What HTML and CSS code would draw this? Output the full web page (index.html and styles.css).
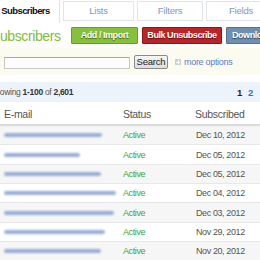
FILE: index.html
```html
<!DOCTYPE html>
<html>
<head>
<meta charset="utf-8">
<link rel="stylesheet" href="styles.css">
</head>
<body>
<div class="page">
  <div class="tabs">
    <div class="tab active">Subscribers</div>
    <div class="tab t-lists">Lists</div>
    <div class="tab t-filters">Filters</div>
    <div class="tab t-fields">Fields</div>
  </div>
  <div class="head">
    <h1 class="title">Subscribers</h1>
    <span class="btn btn-green">Add / Import</span>
    <span class="btn btn-red">Bulk Unsubscribe</span>
    <span class="btn btn-blue">Download</span>
  </div>
  <div class="search">
    <span class="input"></span>
    <span class="sbtn">Search</span>
    <span class="plus"></span>
    <span class="more">more options</span>
  </div>
  <div class="pager">
    <span class="showing">Showing <b>1-100</b> of <b>2,601</b></span>
    <span class="pages"><b class="cur">1</b><b class="link">2</b></span>
  </div>
  <div class="table">
    <div class="row th"><span class="c1">E-mail</span><span class="c2">Status</span><span class="c3">Subscribed</span></div>
    <div class="row odd"><span class="c1"><i class="blur" style="width:98px"></i></span><span class="c2 active-s">Active</span><span class="c3">Dec 10, 2012</span></div>
    <div class="row"><span class="c1"><i class="blur" style="width:76px"></i></span><span class="c2 active-s">Active</span><span class="c3">Dec 05, 2012</span></div>
    <div class="row odd"><span class="c1"><i class="blur" style="width:97px"></i></span><span class="c2 active-s">Active</span><span class="c3">Dec 05, 2012</span></div>
    <div class="row"><span class="c1"><i class="blur" style="width:112px"></i></span><span class="c2 active-s">Active</span><span class="c3">Dec 04, 2012</span></div>
    <div class="row odd"><span class="c1"><i class="blur" style="width:110px"></i></span><span class="c2 active-s">Active</span><span class="c3">Dec 03, 2012</span></div>
    <div class="row"><span class="c1"><i class="blur" style="width:101px"></i></span><span class="c2 active-s">Active</span><span class="c3">Nov 29, 2012</span></div>
    <div class="row odd"><span class="c1"><i class="blur" style="width:97px"></i></span><span class="c2 active-s">Active</span><span class="c3">Nov 20, 2012</span></div>
  </div>
</div>
</body>
</html>
```
FILE: styles.css
```css
html, body { margin: 0; padding: 0; background: #fff; }
body { font-family: "Liberation Sans", Arial, sans-serif; width: 260px; height: 260px; overflow: hidden; }
.page { width: 260px; overflow: hidden; }

.tabs { display: flex; align-items: flex-start; height: 23px; gap: 3px; white-space: nowrap; }
.tab { box-sizing: border-box; flex: none; height: 20px; margin-top: 1px; border: 1px solid #dfe5ee; background: #fff; color: #7d98c6; font-size: 9.5px; letter-spacing: -0.2px; line-height: 18px; text-align: center; }
.tab.active { width: 60px; height: 23px; margin-top: 0; border: none; border-right: 1px solid #dfe3ea; color: #111; font-weight: bold; line-height: 22px; padding-right: 8px; font-size: 9.5px; letter-spacing: -0.6px; }
.t-lists { width: 71px; }
.t-filters { width: 66px; }
.t-fields { width: 70px; }

.head { display: flex; align-items: center; height: 23px; margin-top: 1px; white-space: nowrap; }
.title { margin: 0 0 0 -9px; font-size: 14px; letter-spacing: -0.4px; font-weight: normal; color: #80bd3a; width: 80px; flex: none; line-height: 18px; }
.btn { box-sizing: border-box; flex: none; height: 17px; font-size: 9px; letter-spacing: -0.45px; font-weight: bold; color: #fff; line-height: 15px; text-align: center; text-shadow: 0 1px 1px rgba(0,0,0,0.5); border-radius: 1px; margin-right: 4px; }
.btn-green { width: 67px; background: #86c13c; border: 1px solid #6c9d2c; }
.btn-red { width: 80px; background: #bd2228; border: 1px solid #8e1519; }
.btn-blue { width: 62px; background: #6c8fb2; border: 1px solid #56728f; padding-left: 5px; text-align: left; }

.search { display: flex; align-items: center; height: 27px; margin-top: 1px; background: #fbfbf1; padding-left: 4px; white-space: nowrap; }
.input { box-sizing: border-box; width: 126px; height: 12px; border: 1px solid #c8c8c8; border-top-color: #a8a8a8; background: #fdfdfd; flex: none; margin-top: 2px; }
.sbtn { box-sizing: border-box; margin-left: 4px; width: 34px; height: 14px; border: 1px solid #8a8a8a; border-radius: 2px; background: linear-gradient(#f6f6f6, #dedede); font-size: 9.5px; letter-spacing: -0.2px; line-height: 12px; text-align: center; color: #222; margin-top: 1px; }
.plus { width: 6px; height: 6px; margin-left: 7px; background: #c9d0d6; position: relative; margin-top: 1px; }
.plus::before { content: ""; position: absolute; left: 1px; top: 2.5px; width: 4px; height: 1px; background: #fff; }
.plus::after { content: ""; position: absolute; left: 2.5px; top: 1px; width: 1px; height: 4px; background: #fff; }
.more { margin-left: 3px; font-size: 9px; letter-spacing: -0.3px; color: #5b80c4; }

.pager { display: flex; justify-content: space-between; align-items: center; height: 20px; margin-top: 7px; background: #edf3fb; font-size: 8.5px; letter-spacing: -0.3px; color: #555; }
.showing { margin-left: -10px; }
.showing b { color: #333; }
.pages { display: flex; gap: 6px; margin-right: 7px; font-size: 9.5px; }
.cur { color: #222; }
.link { color: #3d6fc2; }

.table { margin-top: 2px; }
.row { box-sizing: border-box; display: flex; align-items: center; height: 19.35px; border-top: 1px solid #e8e8e8; font-size: 9px; letter-spacing: -0.4px; color: #555; background: #fff; }
.row.odd { background: #f6f6f6; }
.row.th { height: 21px; border-top: none; border-bottom: 1px solid #d8d8d8; box-shadow: 0 1px 2px rgba(0,0,0,0.08); font-size: 10.5px; letter-spacing: -0.3px; color: #555; position: relative; }
.c1 { width: 119px; padding-left: 4px; flex: none; display: flex; align-items: center; }
.c2 { width: 73px; flex: none; }
.c3 { flex: none; }
.row.th .c3 { margin-left: -1px; }
.active-s { color: #3aa83a; }
.blur { display: block; height: 4px; background: #8da6d3; filter: blur(1px); border-radius: 2px; opacity: 0.9; }
```
